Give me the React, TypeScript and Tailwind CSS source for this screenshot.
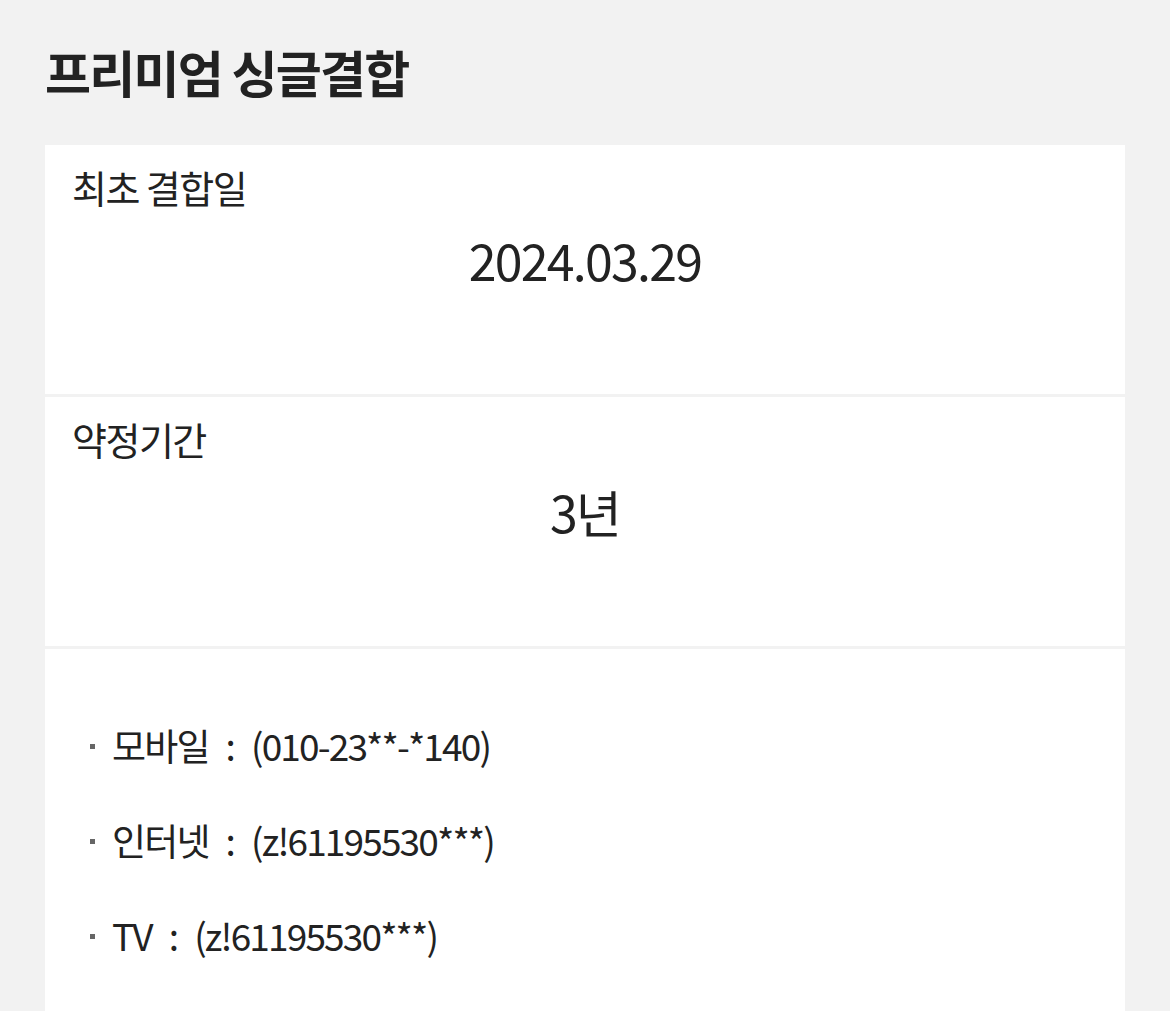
import React from "react";

const font = { fontFamily: '"Noto Sans CJK KR", "Noto Sans", sans-serif' };

interface InfoSectionProps {
  label: string;
  value: string;
}

const InfoSection: React.FC<InfoSectionProps> = ({ label, value }) => (
  <div className="h-[249px] px-[27px] pt-[17px]">
    <p className="text-[38px] leading-[50px] tracking-[-0.04em] text-[#222]">{label}</p>
    <p className="mt-[17px] text-center text-[50px] leading-[60px] tracking-[-0.035em] text-[#222]">
      {value}
    </p>
  </div>
);

const products = [
  { name: "모바일", id: "(010-23**-*140)" },
  { name: "인터넷", id: "(z!61195530***)" },
  { name: "TV", id: "(z!61195530***)" },
];

export default function App() {
  return (
    <div className="min-h-[1011px] bg-[#f2f2f2] px-[45px] pt-[36px]" style={font}>
      <h1 className="text-[50px] font-bold leading-[70px] tracking-[-0.035em] text-[#222]">
        프리미엄 싱글결합
      </h1>
      <div className="mt-[39px] flex flex-col gap-[3px] bg-[#f2f2f2]">
        <div className="bg-white">
          <InfoSection label="최초 결합일" value="2024.03.29" />
        </div>
        <div className="bg-white">
          <InfoSection label="약정기간" value="3년" />
        </div>
        <div className="h-[400px] bg-white pl-[45px] pt-[71px]">
          <ul className="flex flex-col gap-[43px]">
            {products.map((p) => (
              <li
                key={p.name}
                className="flex h-[52px] items-center text-[37px] tracking-[-0.05em] text-[#222]"
              >
                <span className="mr-[17px] h-[5px] w-[5px] bg-[#666]" />
                <span>{p.name}</span>
                <span className="mx-[17px]">:</span>
                <span>{p.id}</span>
              </li>
            ))}
          </ul>
        </div>
      </div>
    </div>
  );
}
